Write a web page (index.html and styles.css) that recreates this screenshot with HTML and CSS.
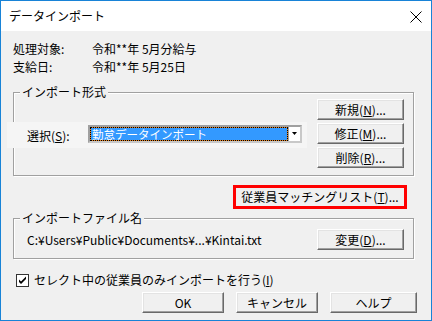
FILE: index.html
```html
<!DOCTYPE html>
<html lang="ja">
<head>
    <meta charset="UTF-8">
    <meta name="viewport" content="width=device-width, initial-scale=1.0">
    <title>データインポート</title>
    <link rel="stylesheet" href="styles.css">
</head>
<body>
    <div class="window">
        <div class="titlebar">
            <span class="title">データインポート</span>
            <svg class="close" width="12" height="12" viewBox="0 0 12 12">
                <path d="M0.5 0.5L11.5 11.5M11.5 0.5L0.5 11.5" stroke="#000" stroke-width="1" fill="none"/>
            </svg>
        </div>
        <div class="client">
            <div class="info">
                <span>処理対象:</span><span>令和**年 5月分給与</span>
                <span>支給日:</span><span>令和**年 5月25日</span>
            </div>

            <fieldset class="group">
                <legend>インポート形式</legend>
                <div class="format-body">
                    <div class="select-band">
                        <span class="select-label">選択(<u>S</u>):</span>
                        <div class="combo">
                            <span class="combo-value">勤怠データインポート</span>
                            <span class="combo-arrow">
                                <svg width="5" height="3" viewBox="0 0 5 3"><path d="M0 0h5L2.5 3z" fill="#000"/></svg>
                            </span>
                        </div>
                    </div>
                    <div class="btn-col">
                        <button class="btn">新規(<u>N</u>)...</button>
                        <button class="btn">修正(<u>M</u>)...</button>
                        <button class="btn">削除(<u>R</u>)...</button>
                    </div>
                </div>
            </fieldset>

            <div class="highlight">
                <button class="btn btn-match">従業員マッチングリスト(<u>T</u>)...</button>
            </div>

            <fieldset class="group">
                <legend>インポートファイル名</legend>
                <div class="file-body">
                    <span class="file-path">C:¥Users¥Public¥Documents¥...¥Kintai.txt</span>
                    <button class="btn">変更(<u>D</u>)...</button>
                </div>
            </fieldset>

            <label class="check-row">
                <span class="checkbox">
                    <svg width="9" height="9" viewBox="0 0 9 9"><path d="M1 3.5l2 2 5-5v2.5l-5 5-2-2z" fill="#000"/></svg>
                </span>
                <span>セレクト中の従業員のみインポートを行う(<u>I</u>)</span>
            </label>

            <div class="actions">
                <button class="btn">OK</button>
                <button class="btn">キャンセル</button>
                <button class="btn">ヘルプ</button>
            </div>
        </div>
    </div>
</body>
</html>
```

FILE: styles.css
```css
body {
    margin: 0;
    font-family: "Noto Sans CJK JP", sans-serif;
    font-size: 12px;
    color: #000;
    background: #fff;
}
.window {
    width: 432px;
    height: 321px;
    box-sizing: border-box;
    border: 1px solid #1883d7;
    display: flex;
    flex-direction: column;
}
.titlebar {
    height: 30px;
    flex: none;
    background: #fff;
    display: flex;
    align-items: center;
    justify-content: space-between;
    padding: 0 9px 0 8px;
}
.title {
    font-size: 12px;
    line-height: 14px;
}
.close {
    display: block;
    margin-top: 1px;
}
.client {
    flex: 1;
    background: #f0f0f0;
    padding: 9px 17px 0 12px;
    display: flex;
    flex-direction: column;
}
.info {
    display: grid;
    grid-template-columns: 79px auto;
    grid-auto-rows: 18px;
    align-items: center;
    line-height: 14px;
}
.group {
    margin: 9px 0 0;
    padding: 0;
    border: 1px solid #a0a0a0;
    box-shadow: inset 1px 1px #fff, 1px 1px #fff;
    min-width: 0;
}
.group legend {
    margin-left: 6px;
    padding: 0 2px;
    line-height: 14px;
    background: #f0f0f0;
}
.format-body {
    display: flex;
    justify-content: space-between;
    padding: 0 9px 7px 0;
}
.select-band {
    margin: 23px 0 0 -7px;
    width: 300px;
    height: 26px;
    background: #f5f5f5;
    display: flex;
    align-items: center;
    padding-left: 20px;
    box-sizing: border-box;
}
.select-label {
    width: 61px;
    line-height: 14px;
    margin-top: 1px;
}
.combo {
    width: 214px;
    height: 18px;
    box-sizing: border-box;
    border: 2px solid #a0a0a0;
    border-right-color: #c8c8c8;
    border-bottom-color: #c8c8c8;
    background: #fff;
    display: flex;
    margin-bottom: 3px;
}
.combo-value {
    flex: 1;
    border: 1px dotted #000;
    background: linear-gradient(#3399ff, #3399ff) padding-box, linear-gradient(#e8801a, #e8801a) border-box;
    color: #fff;
    font-size: 11.5px;
    line-height: 12px;
    padding-left: 1px;
    white-space: nowrap;
}
.combo-arrow {
    width: 11px;
    flex: none;
    border-left: 1px solid #a0a0a0;
    background: #fff;
    display: flex;
    align-items: center;
    justify-content: center;
}
.combo-arrow svg {
    display: block;
}
.btn-col {
    display: flex;
    flex-direction: column;
    gap: 3px;
}
.btn {
    font-family: inherit;
    font-size: 12px;
    line-height: 14px;
    color: #000;
    background: #f0f0f0;
    border: 1px solid;
    border-color: #fff #696969 #696969 #fff;
    box-shadow: inset -1px -1px #a0a0a0, inset 1px 1px #e3e3e3;
    padding: 0;
    margin: 0;
    width: 87px;
    height: 21px;
}
.highlight {
    align-self: flex-end;
    margin: 9px 7px 0 0;
    width: 174px;
    height: 24px;
    box-sizing: border-box;
    border: 3px solid #ff0000;
    display: flex;
}
.btn-match {
    flex: 1;
    height: auto;
    border: none;
    box-shadow: none;
}
.highlight + .group {
    margin-top: 2px;
}
.file-body {
    display: flex;
    justify-content: space-between;
    align-items: center;
    padding: 4px 9px 8px 13px;
}
.check-row {
    display: flex;
    align-items: center;
    line-height: 14px;
    margin: 14px 0 0 3px;
    gap: 5px;
}
.checkbox {
    width: 13px;
    height: 13px;
    box-sizing: border-box;
    border: 1px solid #333;
    background: #fff;
    display: flex;
    align-items: center;
    justify-content: center;
}
.checkbox svg {
    display: block;
}
.actions {
    display: flex;
    justify-content: flex-end;
    gap: 12px;
    margin: 5px -3px 0 0;
}
.actions .btn {
    width: 82px;
}
.actions .btn:last-child {
    width: 87px;
}
```
